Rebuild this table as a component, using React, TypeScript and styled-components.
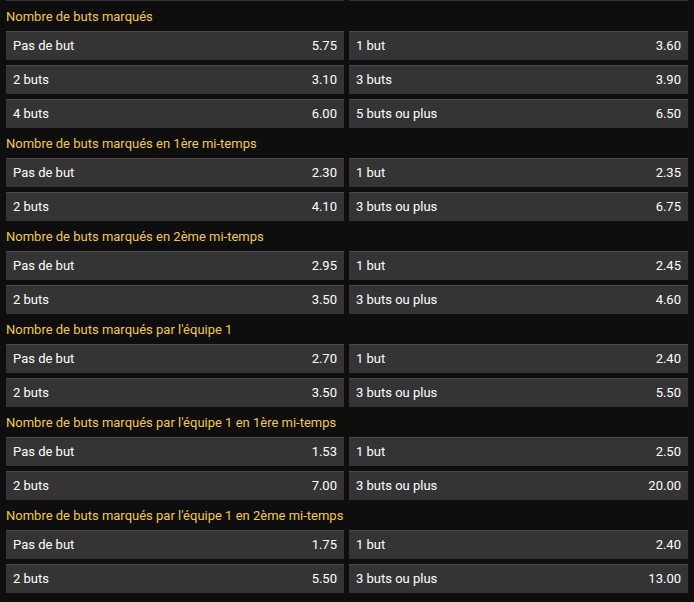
import styled, { createGlobalStyle } from "styled-components";

const GlobalStyle = createGlobalStyle`
  html, body {
    margin: 0;
    padding: 0;
    background: #0e0e0e;
  }
  body {
    font-family: Roboto, "Liberation Sans", Arial, sans-serif;
  }
`;

const Page = styled.div`
  width: 694px;
  height: 602px;
  overflow: hidden;
  background: #0e0e0e;
  padding: 0 6px;
  box-sizing: border-box;
`;

const Grid = styled.div`
  display: grid;
  grid-template-columns: 338px 339px;
  column-gap: 5px;
  row-gap: 5px;
`;

const Stub = styled.div`
  height: 1px;
  background: #333333;
`;

const Heading = styled.h3`
  margin: 0;
  height: 29px;
  padding-top: 1px;
  line-height: 29px;
  font-size: 13px;
  font-weight: 400;
  color: #f4c84c;
  white-space: nowrap;
`;

const Cell = styled.div`
  display: flex;
  align-items: center;
  justify-content: space-between;
  height: 29px;
  box-sizing: border-box;
  padding: 0 7px 2px;
  background: #343434;
  border-top: 1px solid #4b4b4b;
  color: #ffffff;
  font-size: 13px;
`;

const Odd = styled.span`
  font-weight: 400;
`;

type Outcome = [string, string];

type Market = {
  title: string;
  outcomes: Outcome[];
};

const markets: Market[] = [
  {
    title: "Nombre de buts marqués",
    outcomes: [
      ["Pas de but", "5.75"],
      ["1 but", "3.60"],
      ["2 buts", "3.10"],
      ["3 buts", "3.90"],
      ["4 buts", "6.00"],
      ["5 buts ou plus", "6.50"],
    ],
  },
  {
    title: "Nombre de buts marqués en 1ère mi-temps",
    outcomes: [
      ["Pas de but", "2.30"],
      ["1 but", "2.35"],
      ["2 buts", "4.10"],
      ["3 buts ou plus", "6.75"],
    ],
  },
  {
    title: "Nombre de buts marqués en 2ème mi-temps",
    outcomes: [
      ["Pas de but", "2.95"],
      ["1 but", "2.45"],
      ["2 buts", "3.50"],
      ["3 buts ou plus", "4.60"],
    ],
  },
  {
    title: "Nombre de buts marqués par l'équipe 1",
    outcomes: [
      ["Pas de but", "2.70"],
      ["1 but", "2.40"],
      ["2 buts", "3.50"],
      ["3 buts ou plus", "5.50"],
    ],
  },
  {
    title: "Nombre de buts marqués par l'équipe 1 en 1ère mi-temps",
    outcomes: [
      ["Pas de but", "1.53"],
      ["1 but", "2.50"],
      ["2 buts", "7.00"],
      ["3 buts ou plus", "20.00"],
    ],
  },
  {
    title: "Nombre de buts marqués par l'équipe 1 en 2ème mi-temps",
    outcomes: [
      ["Pas de but", "1.75"],
      ["1 but", "2.40"],
      ["2 buts", "5.50"],
      ["3 buts ou plus", "13.00"],
    ],
  },
];

const MarketBlock = ({ title, outcomes }: Market) => (
  <>
    <Heading>{title}</Heading>
    <Grid>
      {outcomes.map(([label, odd]) => (
        <Cell key={label}>
          <span>{label}</span>
          <Odd>{odd}</Odd>
        </Cell>
      ))}
    </Grid>
  </>
);

const App = () => (
  <>
    <GlobalStyle />
    <Page>
      <Grid>
        <Stub />
        <Stub />
      </Grid>
      {markets.map((m) => (
        <MarketBlock key={m.title} {...m} />
      ))}
    </Page>
  </>
);

export default App;
